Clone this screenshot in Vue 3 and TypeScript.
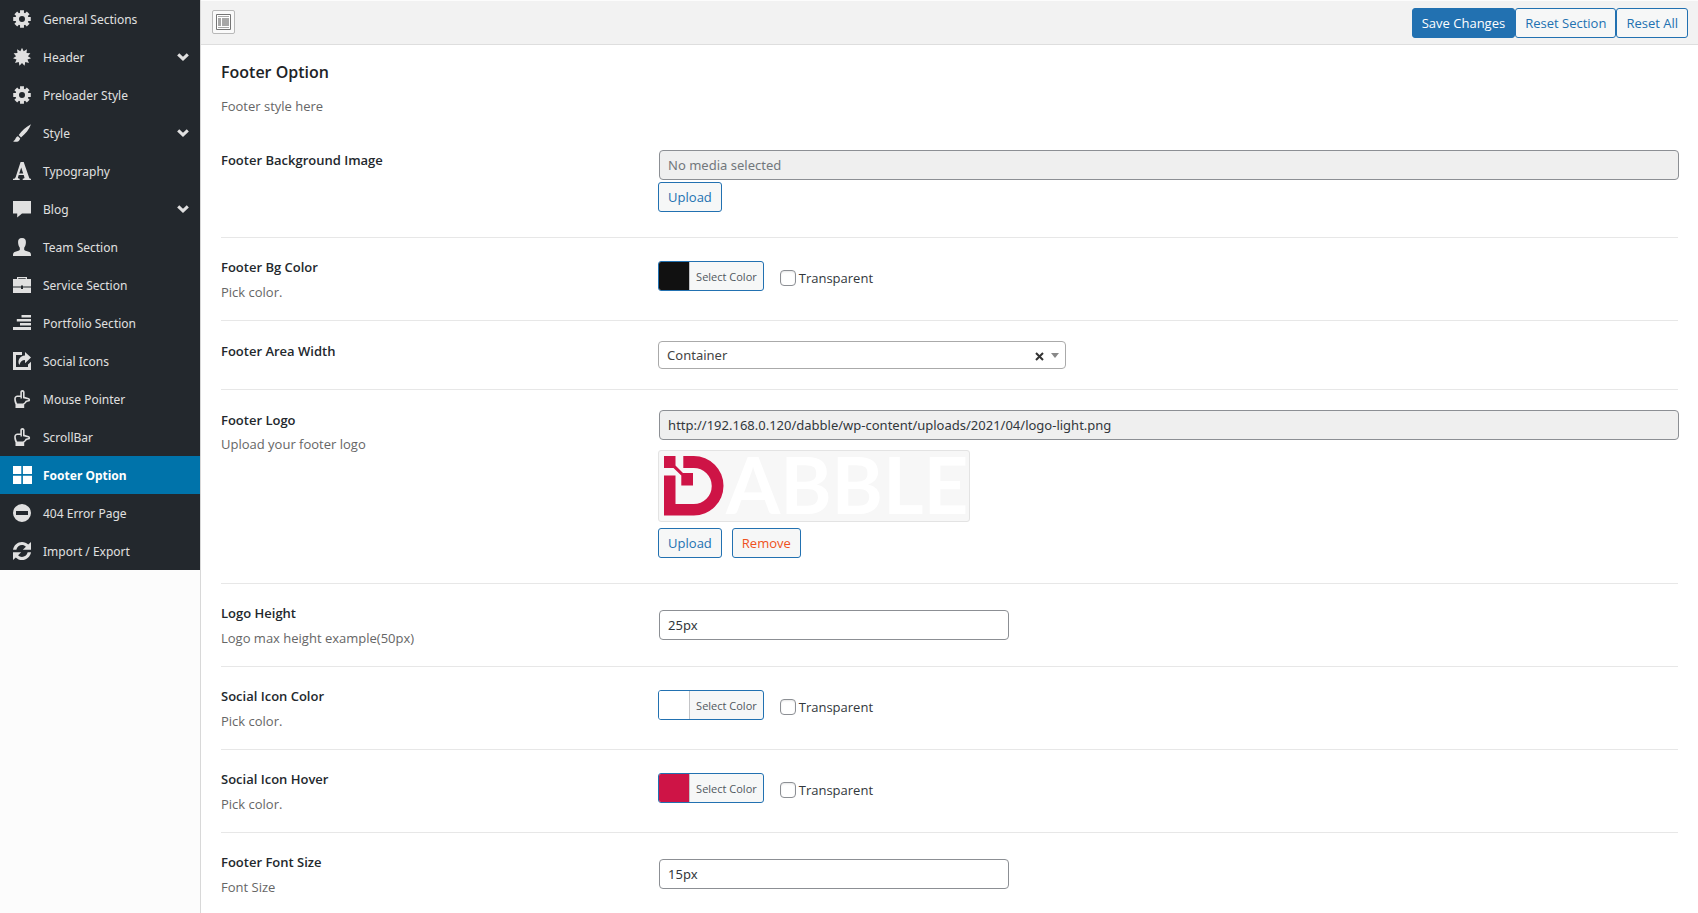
<script setup lang="ts">
import { ref } from 'vue'

interface MenuItem {
  label: string
  icon: string
  children?: boolean
}

interface Field {
  id: string
  title: string
  desc?: string
  type: 'media' | 'color' | 'select' | 'text'
  value: string
  preview?: boolean
}

/** Closed polygon alternating between tooth tip and tooth root. */
function star(points: number, outer: number, inner: number): string {
  const out: string[] = []
  for (let i = 0; i < points * 2; i++) {
    const r = i % 2 ? inner : outer
    const a = (Math.PI * i) / points - Math.PI / 2
    out.push(`${(9 + r * Math.cos(a)).toFixed(2)} ${(9 + r * Math.sin(a)).toFixed(2)}`)
  }
  return `M${out.join('L')}Z`
}

/** Eight-toothed wheel with a round hole. */
function gear(): string {
  const out: string[] = []
  for (let i = 0; i < 8; i++) {
    const c = (Math.PI * i) / 4
    for (const [r, d] of [[6.6, -0.3], [9, -0.22], [9, 0.22], [6.6, 0.3]]) {
      out.push(`${(9 + r * Math.cos(c + d)).toFixed(2)} ${(9 + r * Math.sin(c + d)).toFixed(2)}`)
    }
  }
  return `M${out.join('L')}ZM9 6a3 3 0 1 0 0 6a3 3 0 1 0 0-6Z`
}

const hand =
  'M2.500 18V14.400C1.600 12.600 1.200 10.600 1.200 8.700C1.200 7.200 2.200 5.600 4 5.400H7.300V2.200C7.300-.6 11.600-.6 11.600 2.200V6.800L15.600 8C17.600 8.800 17.600 11.200 15.600 11.600L13.800 12C13.200 13 12.200 13.800 11.200 14.400V18ZM4.200 13.600H10C11.200 12.900 12.100 11.900 12.600 10.700L15.400 10V9.600L10 8.200V2.400C10 1.600 8.900 1.600 8.900 2.400V8.600H7.500V7H4.200C3.200 7.100 2.800 7.900 2.800 8.800C2.900 10.600 3.400 12.300 4.200 13.600Z'

const icons: Record<string, string> = {
  cog: gear(),
  burst: star(11, 9.2, 6),
  brush: 'M18 .2C13 2.6 8.6 7 5.7 11.1L8 13.4C12.500 9.800 16.200 5.400 18 .2ZM5 12.200C2.600 12.400 3 15.800 0 17.300C2.500 18.400 6.500 18 7.200 14.400Z',
  font: 'M7.600 0H10.700L16 15.300C16.300 16.400 16.900 16.700 18 16.800V18H9.700V16.800C11.200 16.700 11.700 16.300 11.400 15.300L10.700 13H5.700L5 15.300C4.700 16.300 5.200 16.700 6.700 16.800V18H0V16.800C1.400 16.700 2.200 16.200 2.700 14.900ZM8.200 5.400L6.200 11.600H10.200Z',
  comment: 'M0 1H18V13.500H9L4.200 17.400V13.500H0Z',
  user: 'M9 0C11.900 0 13.200 1.700 12.900 4.700C12.800 7 12 8.700 11.200 9.700V11.900C12.600 13 15.600 13.500 16.900 14.300C17.900 15 18 16.400 18 18H0C0 16.400.1 15 1.100 14.300C2.400 13.500 5.400 13 6.800 11.900V9.700C6 8.700 5.200 7 5.100 4.700C4.800 1.700 6.100 0 9 0Z',
  briefcase: 'M4 3V1H14V3H18V10.500H10V9.500H8V10.500H0V3ZM5.300 3H12.700V2.200H5.300ZM0 11.500H8V13H10V11.500H18V17H0Z',
  indent: 'M8.500 1H18V3.500H8.500ZM3.800 5H18V7.500H3.800ZM7 9H18V11.500H7ZM0 13H18V16H0Z',
  share: 'M0 0H9V3H3V15H15V12.500L18 9.800V18H0ZM12 0L18 5.500L12 11.200V8C9 8 7.400 9.700 6.400 13C3.900 8.500 6.800 3.600 12 3.400Z',
  hand,
  grid: 'M0 0H8.300V8H0ZM9.900 0H19V8H9.900ZM0 9.800H8.300V18H0ZM9.900 9.800H19V18H9.900Z',
  minus: 'M9 0A9 9 0 1 0 9 18A9 9 0 1 0 9 0ZM3 7H15V11H3Z',
  refresh:
    'M0 7.800C.7 3.300 4.500 0 9 0C11.500 0 13.600 1 15.200 2.600L18 0V7.800H9.800L12.900 4.800C11.800 3.700 10.500 3.100 9 3.100C6.300 3.100 4.100 5 3.300 7.800ZM18 10.200C17.300 14.700 13.500 18 9 18C6.500 18 4.400 17 2.800 15.400L0 18V10.200H8.200L5.100 13.200C6.200 14.300 7.500 14.900 9 14.900C11.700 14.900 13.900 13 14.700 10.200Z',
}

const menu: MenuItem[] = [
  { label: 'General Sections', icon: 'cog' },
  { label: 'Header', icon: 'burst', children: true },
  { label: 'Preloader Style', icon: 'cog' },
  { label: 'Style', icon: 'brush', children: true },
  { label: 'Typography', icon: 'font' },
  { label: 'Blog', icon: 'comment', children: true },
  { label: 'Team Section', icon: 'user' },
  { label: 'Service Section', icon: 'briefcase' },
  { label: 'Portfolio Section', icon: 'indent' },
  { label: 'Social Icons', icon: 'share' },
  { label: 'Mouse Pointer', icon: 'hand' },
  { label: 'ScrollBar', icon: 'hand' },
  { label: 'Footer Option', icon: 'grid' },
  { label: '404 Error Page', icon: 'minus' },
  { label: 'Import / Export', icon: 'refresh' },
]

const active = ref('Footer Option')

const fields = ref<Field[]>([
  { id: 'bg-image', title: 'Footer Background Image', type: 'media', value: '' },
  { id: 'bg-color', title: 'Footer Bg Color', desc: 'Pick color.', type: 'color', value: '#111111' },
  { id: 'width', title: 'Footer Area Width', type: 'select', value: 'Container' },
  {
    id: 'logo',
    title: 'Footer Logo',
    desc: 'Upload your footer logo',
    type: 'media',
    value: 'http://192.168.0.120/dabble/wp-content/uploads/2021/04/logo-light.png',
    preview: true,
  },
  { id: 'logo-height', title: 'Logo Height', desc: 'Logo max height example(50px)', type: 'text', value: '25px' },
  { id: 'icon-color', title: 'Social Icon Color', desc: 'Pick color.', type: 'color', value: '#ffffff' },
  { id: 'icon-hover', title: 'Social Icon Hover', desc: 'Pick color.', type: 'color', value: '#ce1446' },
  { id: 'font-size', title: 'Footer Font Size', desc: 'Font Size', type: 'text', value: '15px' },
])
</script>

<template>
  <div class="panel">
    <nav class="sidebar" aria-label="Option sections">
      <ul class="menu">
        <li v-for="item in menu" :key="item.label">
          <a href="#" class="menu-link" :class="{ active: item.label === active }" @click.prevent="active = item.label">
            <svg class="menu-icon" viewBox="0 0 19 18" aria-hidden="true">
              <path :d="icons[item.icon]" fill-rule="evenodd" />
            </svg>
            <span class="menu-label">{{ item.label }}</span>
            <svg v-if="item.children" class="chevron" viewBox="0 0 12 8" aria-hidden="true">
              <path d="M1.200 1.300L6 5.900L10.800 1.300" />
            </svg>
          </a>
        </li>
      </ul>
    </nav>

    <main class="main">
      <header class="toolbar">
        <button type="button" class="expand" aria-label="Expand options">
          <svg viewBox="0 0 15 16" aria-hidden="true">
            <path d="M.5.500H14.500V15.500H.5Z" fill="#fff" stroke="#757575" />
            <path d="M2 2H13V3H2ZM2 4H5V12H2ZM6 4H13V12H6ZM2 13H13V14H2Z" fill="#a8a8a8" />
          </svg>
        </button>
        <div class="actions">
          <button type="button" class="btn primary">Save Changes</button>
          <button type="button" class="btn">Reset Section</button>
          <button type="button" class="btn">Reset All</button>
        </div>
      </header>

      <form class="content" @submit.prevent>
        <h2>Footer Option</h2>
        <p class="intro">Footer style here</p>

        <div v-for="f in fields" :key="f.id" class="row" :class="f.type">
          <div class="heading">
            <label class="title" :for="f.id">{{ f.title }}</label>
            <span v-if="f.desc" class="desc">{{ f.desc }}</span>
          </div>

          <div v-if="f.type === 'media'" class="field">
            <input :id="f.id" class="input wide" type="text" readonly placeholder="No media selected" :value="f.value" />
            <div v-if="f.preview" class="preview">
              <svg viewBox="0 0 300 60" role="img" aria-label="Dabble">
                <g fill="#ce1446">
                  <path d="M0 0H11.500V9.500L19 17H29V29.500H17.300V19.500L9.500 12H0Z" />
                  <path d="M19.300 0H29.750A29.750 29.750 0 0 1 29.750 59.500H0V19.500H11.500V48H29.750A18 18 0 0 0 29.750 12H19.300Z" />
                </g>
                <text x="62" y="58" fill="#fff">ABBLE</text>
              </svg>
            </div>
            <div class="buttons">
              <button type="button" class="btn">Upload</button>
              <button v-if="f.preview" type="button" class="btn remove">Remove</button>
            </div>
          </div>

          <div v-else-if="f.type === 'color'" class="field">
            <button :id="f.id" type="button" class="picker">
              <span class="swatch" :style="{ background: f.value }"></span>
              <span class="picker-text">Select Color</span>
            </button>
            <label class="check"><input type="checkbox" />Transparent</label>
          </div>

          <div v-else-if="f.type === 'select'" class="field">
            <div class="select-wrap">
              <select :id="f.id" v-model="f.value">
                <option>Container</option>
                <option>Full Width</option>
              </select>
              <button type="button" class="clear" aria-label="Clear selection">
                <svg viewBox="0 0 9 9" aria-hidden="true"><path d="M1 1L8 8M8 1L1 8" /></svg>
              </button>
              <svg class="caret" viewBox="0 0 8 5" aria-hidden="true"><path d="M0 0H8L4 5Z" /></svg>
            </div>
          </div>

          <div v-else class="field">
            <input :id="f.id" v-model="f.value" class="input" type="text" />
          </div>
        </div>
      </form>
    </main>
  </div>
</template>

<style>
body {
  margin: 0;
  background: #fcfcfc;
}
</style>

<style scoped>
.panel {
  display: flex;
  min-height: 100vh;
  background: #fcfcfc;
  color: #3c434a;
  font-family: 'Open Sans', 'Noto Sans', sans-serif;
  font-size: 13px;
  line-height: 18px;
}

button,
input,
select {
  box-sizing: border-box;
  margin: 0;
  font-family: inherit;
}

.sidebar {
  flex: 0 0 200px;
}

.menu {
  margin: 0;
  padding: 0;
  list-style: none;
  background: #23282d;
}

.menu-link {
  display: flex;
  align-items: center;
  gap: 11px;
  height: 38px;
  padding: 0 11px 0 13px;
  color: #e0e0e0;
  font-family: 'Noto Sans', sans-serif;
  font-size: 12px;
  text-decoration: none;
}

.menu-link.active {
  background: #0073aa;
  color: #fff;
  font-weight: 700;
}

.menu-icon {
  width: 19px;
  height: 18px;
  fill: currentColor;
}

.menu-label {
  flex: 1;
  padding-top: 2px;
}

.chevron {
  width: 12px;
  height: 8px;
  fill: none;
  stroke: currentColor;
  stroke-width: 3;
}

.main {
  flex: 1;
  min-width: 0;
  border-left: 1px solid #d8d8d8;
  background: #fff;
}

.toolbar {
  display: flex;
  align-items: flex-start;
  justify-content: space-between;
  box-sizing: border-box;
  height: 45px;
  padding: 7px 10px 0 11px;
  border-top: 1px solid #fcfcfc;
  border-bottom: 1px solid #dedede;
  background: #f2f2f2;
}

.expand {
  display: flex;
  align-items: center;
  justify-content: center;
  width: 23px;
  height: 24px;
  margin-top: 2px;
  padding: 0;
  border: 1px solid #b8b8b8;
  border-radius: 2px;
  background: #fafafa;
}

.expand svg {
  width: 15px;
  height: 16px;
}

.actions {
  display: flex;
}

.btn {
  height: 30px;
  padding: 0 9px;
  border: 1px solid #2271b1;
  border-radius: 3px;
  background: #f6f7f7;
  color: #2271b1;
  font-size: 13px;
  line-height: 28px;
  white-space: nowrap;
}

.btn.primary {
  background: #2271b1;
  color: #fff;
}

.btn.remove {
  color: #ef5120;
}

.content {
  padding: 0 20px;
}

h2 {
  margin: 0;
  padding-top: 16px;
  color: #1d2327;
  font-size: 16px;
  font-weight: 600;
  line-height: 22px;
}

.intro {
  margin: 13px 0 14px;
  color: #666;
  line-height: 20px;
}

.row {
  display: grid;
  grid-template-columns: 30% minmax(0, 1fr);
  border-bottom: 1px solid #e7e7e7;
}

.row:last-child {
  border-bottom: 0;
}

.heading {
  display: flex;
  flex-direction: column;
  gap: 5px;
  padding: 20px 0 18px;
}

.color .heading,
.text .heading {
  gap: 6px;
  padding-top: 19px;
}

.title {
  align-self: flex-start;
  color: #23282d;
  font-size: 13px;
  font-weight: 600;
  line-height: 20px;
}

.desc {
  color: #666;
  line-height: 19px;
}

.media .field {
  padding: 20px 0 25px;
}

.text .field {
  display: flex;
  align-items: center;
}

.select .field {
  padding: 20px 0;
}

.color .field {
  display: flex;
  align-items: flex-start;
  gap: 16px;
  padding-top: 23px;
}

.input {
  width: 350px;
  max-width: 100%;
  height: 30px;
  margin-left: 1px;
  padding: 0 8px;
  border: 1px solid #8c8f94;
  border-radius: 4px;
  background: #fff;
  color: #32373c;
  font-family: 'Noto Sans', sans-serif;
  font-size: 13px;
}

.input.wide {
  display: block;
  width: 100%;
  background: #efefef;
}

.input::placeholder {
  color: #72777c;
  opacity: 1;
}

.preview {
  box-sizing: border-box;
  width: 312px;
  max-width: 100%;
  height: 72px;
  margin: 10px 0 4px;
  padding: 5px;
  border: 1px solid #e3e3e3;
  border-radius: 3px;
  background: #f7f7f7;
}

.preview svg {
  display: block;
  width: 300px;
  height: 60px;
  overflow: visible;
}

.preview text {
  font-family: Lato, sans-serif;
  font-size: 78px;
  font-weight: 700;
}

.buttons {
  display: flex;
  gap: 10px;
  padding-top: 2px;
}

.picker {
  display: flex;
  height: 30px;
  padding: 0;
  overflow: hidden;
  border: 1px solid #2271b1;
  border-radius: 3px;
  background: #f6f7f7;
  color: #50575e;
  font-size: 11px;
  line-height: 28px;
}

.swatch {
  width: 30px;
  height: 28px;
  border-right: 1px solid #c3c4c7;
}

.picker-text {
  padding: 1px 6px 0;
}

.check {
  display: flex;
  align-items: center;
  gap: 3px;
  margin-top: 8px;
  color: #32373c;
}

.check input {
  width: 16px;
  height: 16px;
  border: 1px solid #8c8f94;
  border-radius: 4px;
  appearance: none;
  background: #fff;
  box-shadow: inset 0 1px 2px rgba(0, 0, 0, 0.1);
}

.select-wrap {
  position: relative;
  width: 40%;
}

select {
  display: block;
  width: 100%;
  height: 28px;
  padding: 0 40px 0 8px;
  border: 1px solid #aaa;
  border-radius: 4px;
  appearance: none;
  background: #fff;
  color: #444;
  font-family: 'Noto Sans', sans-serif;
  font-size: 13px;
}

.clear {
  position: absolute;
  top: 6px;
  right: 22px;
  display: flex;
  align-items: center;
  height: 18px;
  padding: 0;
  border: 0;
  background: none;
}

.clear svg {
  width: 9px;
  height: 9px;
  stroke: #333;
  stroke-width: 2;
}

.caret {
  position: absolute;
  top: 12px;
  right: 7px;
  width: 8px;
  height: 5px;
  fill: #888;
}
</style>
